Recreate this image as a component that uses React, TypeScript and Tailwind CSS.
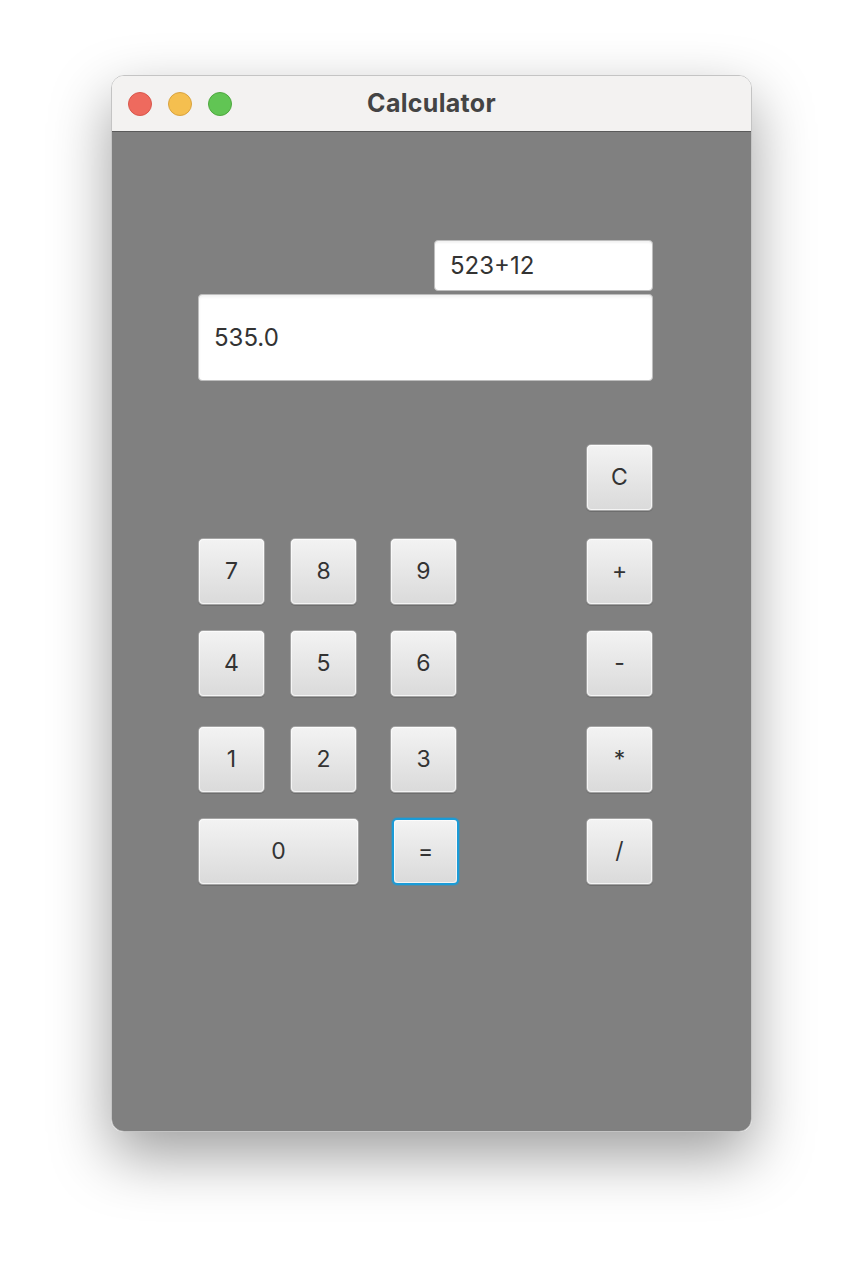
const font = { fontFamily: "Inter, 'Noto Sans', sans-serif" };

const Btn = ({ label, wide, focused }: { label: string; wide?: boolean; focused?: boolean }) => (
  <button
    className={
      (wide ? "w-[161px] " : "w-[67px] ") +
      (focused
        ? "border-2 border-[#1a9bd7] shadow-[0_0_0_1px_rgba(26,155,215,0.35)] "
        : "border border-[#a4a4a4] shadow-[0_1px_0_rgba(0,0,0,0.15)] ") +
      "h-[67px] rounded-[5px] bg-gradient-to-b from-[#f3f3f3] to-[#dadada] text-[23px] text-[#333333] flex items-center justify-center"
    }
  >
    <span className="flex h-full w-full items-center justify-center rounded-[4px] border border-white/70">{label}</span>
  </button>
);

const App = () => {
  return (
    <div className="min-h-[1280px] w-[864px] bg-white pt-[75px] pl-[111px]" style={font}>
      <div className="flex h-[1057px] w-[641px] flex-col overflow-hidden rounded-[13px] border border-[#c4c4c4] shadow-[0_24px_60px_rgba(0,0,0,0.38)]">
        <div className="relative flex h-[56px] items-center border-b border-[#5a5a5a] bg-[#f3f2f1]">
          <div className="flex items-center gap-[16px] pl-[16px]">
            <span className="h-[24px] w-[24px] rounded-full border border-[#d9574c] bg-[#ee6a5e]" />
            <span className="h-[24px] w-[24px] rounded-full border border-[#d9a33f] bg-[#f5bf4f]" />
            <span className="h-[24px] w-[24px] rounded-full border border-[#4ea83f] bg-[#61c554]" />
          </div>
          <div className="absolute inset-0 flex items-center justify-center text-[25px] font-bold tracking-[0.3px] text-[#444444]">
            Calculator
          </div>
        </div>
        <div className="flex flex-1 flex-col bg-[#808080] pl-[86px]">
          <div className="flex w-[455px] flex-col">
            <div className="mt-[108px] flex h-[51px] w-[219px] items-center self-end rounded-[4px] border border-[#bdbdbd] bg-white pl-[15px] text-[24px] text-[#333333] shadow-[inset_0_2px_2px_rgba(0,0,0,0.05)]">
              523+12
            </div>
            <div className="mt-[3px] flex h-[87px] items-center rounded-[4px] border border-[#bdbdbd] bg-white pl-[15px] text-[24px] text-[#333333] shadow-[inset_0_2px_3px_rgba(0,0,0,0.06)]">
              535.0
            </div>
            <div className="mt-[63px] flex justify-end">
              <Btn label="C" />
            </div>
            <div className="mt-[27px] flex">
              <Btn label="7" />
              <div className="ml-[25px]"><Btn label="8" /></div>
              <div className="ml-[33px]"><Btn label="9" /></div>
              <div className="ml-auto"><Btn label="+" /></div>
            </div>
            <div className="mt-[25px] flex">
              <Btn label="4" />
              <div className="ml-[25px]"><Btn label="5" /></div>
              <div className="ml-[33px]"><Btn label="6" /></div>
              <div className="ml-auto"><Btn label="-" /></div>
            </div>
            <div className="mt-[29px] flex">
              <Btn label="1" />
              <div className="ml-[25px]"><Btn label="2" /></div>
              <div className="ml-[33px]"><Btn label="3" /></div>
              <div className="ml-auto"><Btn label="*" /></div>
            </div>
            <div className="mt-[25px] flex">
              <Btn label="0" wide />
              <div className="ml-[33px]"><Btn label="=" focused /></div>
              <div className="ml-auto"><Btn label="/" /></div>
            </div>
          </div>
        </div>
      </div>
    </div>
  );
};

export default App;
